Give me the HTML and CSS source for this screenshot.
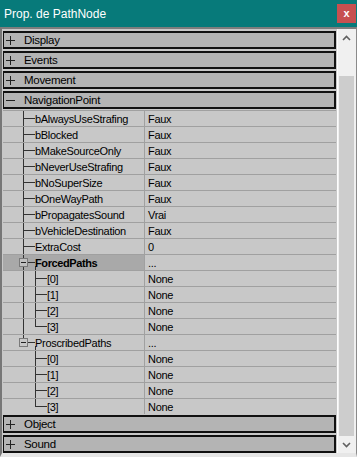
FILE: index.html
```html
<!DOCTYPE html>
<html>
<head>
<meta charset="utf-8">
<link rel="stylesheet" href="styles.css">
</head>
<body>
<div class="win">
  <div class="title">
    <span class="title-text">Prop. de PathNode</span>
    <span class="close">x</span>
  </div>
  <div class="frame">
    <div class="list">
      <div class="cat"><span class="sign plus"></span><span class="cat-label">Display</span></div>
      <div class="cat"><span class="sign plus"></span><span class="cat-label">Events</span></div>
      <div class="cat"><span class="sign plus"></span><span class="cat-label">Movement</span></div>
      <div class="cat cat-open"><span class="sign"></span><span class="cat-label">NavigationPoint</span></div>
      <div class="rows">
        <div class="row"><div class="name t1">bAlwaysUseStrafing</div><div class="val">Faux</div></div>
        <div class="row"><div class="name t1">bBlocked</div><div class="val">Faux</div></div>
        <div class="row"><div class="name t1">bMakeSourceOnly</div><div class="val">Faux</div></div>
        <div class="row"><div class="name t1">bNeverUseStrafing</div><div class="val">Faux</div></div>
        <div class="row"><div class="name t1">bNoSuperSize</div><div class="val">Faux</div></div>
        <div class="row"><div class="name t1">bOneWayPath</div><div class="val">Faux</div></div>
        <div class="row"><div class="name t1">bPropagatesSound</div><div class="val">Vrai</div></div>
        <div class="row"><div class="name t1">bVehicleDestination</div><div class="val">Faux</div></div>
        <div class="row"><div class="name t1">ExtraCost</div><div class="val">0</div></div>
        <div class="row"><div class="name tb sel"><span class="box"></span><b>ForcedPaths</b></div><div class="val">...</div></div>
        <div class="row"><div class="name t12">[0]</div><div class="val">None</div></div>
        <div class="row"><div class="name t12">[1]</div><div class="val">None</div></div>
        <div class="row"><div class="name t12">[2]</div><div class="val">None</div></div>
        <div class="row"><div class="name t12l">[3]</div><div class="val">None</div></div>
        <div class="row"><div class="name tbl"><span class="box"></span>ProscribedPaths</div><div class="val">...</div></div>
        <div class="row"><div class="name t2">[0]</div><div class="val">None</div></div>
        <div class="row"><div class="name t2">[1]</div><div class="val">None</div></div>
        <div class="row"><div class="name t2">[2]</div><div class="val">None</div></div>
        <div class="row"><div class="name t2l">[3]</div><div class="val">None</div></div>
      </div>
      <div class="cat cat-after"><span class="sign plus"></span><span class="cat-label">Object</span></div>
      <div class="cat"><span class="sign plus"></span><span class="cat-label">Sound</span></div>
    </div>
    <div class="scroll">
      <div class="arrow">
        <svg width="9" height="6" viewBox="0 0 9 6"><path d="M1 5 L4.5 1.5 L8 5" fill="none" stroke="#606060" stroke-width="1.6"/></svg>
      </div>
      <div class="track"><div class="thumb"></div></div>
      <div class="arrow">
        <svg width="9" height="6" viewBox="0 0 9 6"><path d="M1 1 L4.5 4.5 L8 1" fill="none" stroke="#606060" stroke-width="1.6"/></svg>
      </div>
    </div>
  </div>
</div>
</body>
</html>
```

FILE: styles.css
```css
* { box-sizing: border-box; }
html, body { margin: 0; padding: 0; }
body {
  font-family: "Liberation Sans", Arial, sans-serif;
  font-size: 11px;
  color: #000;
  background: #c8c8c8;
}
.win {
  width: 357px;
  height: 457px;
  display: flex;
  flex-direction: column;
  background: #c8c8c8;
  overflow: hidden;
}
.title {
  height: 27px;
  flex: none;
  background: #077a7a;
  display: flex;
  align-items: center;
  justify-content: space-between;
  padding: 0 1px 0 4px;
}
.title-text {
  color: #fff;
  font-size: 12px;
  letter-spacing: 0;
}
.close {
  width: 19px;
  height: 19px;
  background: #c75050;
  color: #fff;
  font-weight: bold;
  font-size: 11px;
  display: flex;
  align-items: center;
  justify-content: center;
  padding-bottom: 2px;
}
.frame {
  flex: 1;
  display: flex;
  border-top: 2px solid #7d7d7d;
  border-left: 2px solid #777;
  border-right: 1px solid #8a8a8a;
  border-bottom: 4px solid #e6e6e6;
  min-height: 0;
}
.list {
  width: 335px;
  flex: none;
  padding: 2px 1px 0 1px;
  display: flex;
  flex-direction: column;
  background: #c8c8c8;
}
.cat {
  height: 18px;
  flex: none;
  background: #b4b4b4;
  border: 2px solid #111;
  border-left-width: 1px;
  border-right-width: 2px;
  margin-bottom: 2px;
  display: flex;
  align-items: center;
  padding-left: 2px;
  letter-spacing: -0.3px;
}
.cat-open { margin-bottom: 1px; }
.cat-after { margin-top: 1px; }
.sign {
  width: 9px;
  height: 9px;
  flex: none;
  margin-right: 9px;
  background: linear-gradient(#222, #222) 0 4px / 9px 1px no-repeat;
}
.sign.plus {
  background:
    linear-gradient(#222, #222) 0 4px / 9px 1px no-repeat,
    linear-gradient(#222, #222) 4px 0 / 1px 9px no-repeat;
}
.cat-label { font-size: 11.5px; }
.rows { display: flex; flex-direction: column; }
.row {
  height: 16px;
  flex: none;
  display: flex;
  border-top: 1px solid #a0a0a0;
  background: #c8c8c8;
}
.name {
  width: 141px;
  flex: none;
  display: flex;
  align-items: center;
  padding-left: 32px;
  white-space: nowrap;
  letter-spacing: -0.3px;
  background-repeat: no-repeat;
}
.val {
  flex: 1;
  border-left: 1px solid #a0a0a0;
  padding-left: 3px;
  display: flex;
  align-items: center;
  letter-spacing: -0.3px;
}
.t1 {
  background-image: linear-gradient(#333, #333), linear-gradient(#333, #333);
  background-position: 20px 0, 20px 7px;
  background-size: 1px 100%, 12px 1px;
}
.t12, .t12l {
  padding-left: 44px;
  background-image: linear-gradient(#333, #333), linear-gradient(#333, #333), linear-gradient(#333, #333);
  background-position: 20px 0, 32px 0, 32px 7px;
  background-size: 1px 100%, 1px 100%, 12px 1px;
}
.t12l { background-size: 1px 100%, 1px 8px, 12px 1px; }
.t2, .t2l {
  padding-left: 44px;
  background-image: linear-gradient(#333, #333), linear-gradient(#333, #333);
  background-position: 32px 0, 32px 7px;
  background-size: 1px 100%, 12px 1px;
}
.t2l { background-size: 1px 8px, 12px 1px; }
.tb, .tbl {
  padding-left: 16px;
  background-image: linear-gradient(#333, #333), linear-gradient(#333, #333), linear-gradient(#333, #333);
  background-position: 20px 0, 25px 7px, 32px 11px;
  background-size: 1px 100%, 7px 1px, 1px 100%;
}
.tbl {
  background-size: 1px 4px, 7px 1px, 1px 100%;
}
.sel { background-color: #a9a9a9; }
.sel b { font-weight: bold; letter-spacing: -0.4px; }
.box {
  width: 9px;
  height: 9px;
  flex: none;
  margin-right: 7px;
  border: 1px solid #7a7a7a;
  background: #c8c8c8 linear-gradient(#222, #222) 1px 3px / 5px 1px no-repeat;
}
.sel .box { background-color: #c0c0c0; }
.scroll {
  width: 19px;
  flex: none;
  display: flex;
  flex-direction: column;
  background: #f0f0f0;
  border-left: 1px solid #fdfdfd;
}
.arrow {
  height: 17px;
  flex: none;
  display: flex;
  align-items: center;
  justify-content: center;
  padding-right: 1px;
}
.track {
  flex: 1;
  display: flex;
  flex-direction: column;
  padding: 30px 2px 0 1px;
}
.thumb {
  flex: 1;
  background: #cdcdcd;
}
```
